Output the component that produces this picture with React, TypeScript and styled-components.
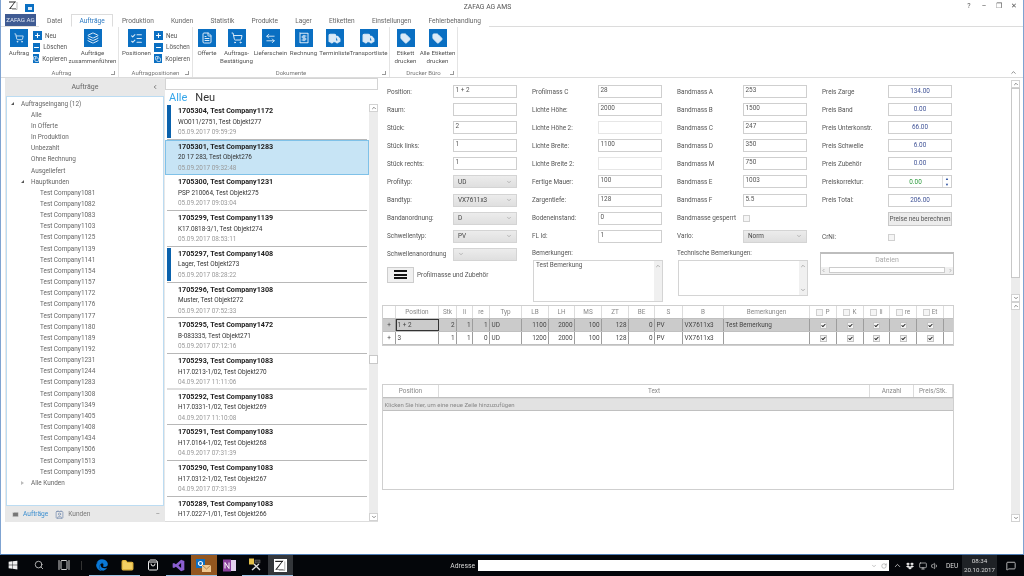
import React from "react";
import styled, { createGlobalStyle } from "styled-components";
import {
  ArrowLeftRight,
  Check,
  ChevronDown,
  ChevronLeft,
  ChevronRight,
  ChevronUp,
  Copy,
  FileText,
  Folder,
  Layers,
  ListChecks,
  Mail,
  MessageSquare,
  Minus,
  Monitor,
  Plus,
  Receipt,
  RotateCw,
  Search,
  ShoppingBag,
  ShoppingCart,
  Tag,
  Truck,
  Volume1,
  Contact,
  GalleryHorizontal,
} from "lucide-react";
import { FaDropbox, FaEdge, FaWindows } from "react-icons/fa";

const GlobalStyle = createGlobalStyle`
  html, body {
    margin: 0;
    padding: 0;
    background: #fff;
    overflow: hidden;
  }
  body {
    font-family: Roboto, "Open Sans", sans-serif;
    font-size: 6.4px;
    color: #444;
  }
  * { box-sizing: border-box; }
`;

const Screen = styled.div`
  width: 1024px;
  height: 576px;
  display: flex;
  flex-direction: column;
  overflow: hidden;
  filter: blur(0.3px);
`;

const AppWindow = styled.div`
  height: 555px;
  display: flex;
  flex-direction: column;
  border-left: 1px solid #7fa3d1;
  border-right: 1px solid #7fa3d1;
  border-bottom: 1px solid #4f7cb3;
  background: #fff;
`;

/* title bar */
const TitleBar = styled.div`
  height: 14px;
  display: flex;
  align-items: flex-start;
  position: relative;
  padding-left: 7px;
`;

const QuickSave = styled.div`
  width: 9px;
  height: 8px;
  margin: 4px 0 0 7px;
  background: #0a6fc2;
  display: flex;
  align-items: center;
  justify-content: center;
`;

const QuickSaveInner = styled.div`
  width: 4px;
  height: 3px;
  background: #dbe9f6;
`;

const TitleText = styled.div`
  flex: 1;
  text-align: center;
  padding-top: 3px;
  padding-right: 24px;
  color: #555;
  font-size: 6.8px;
`;

const WindowControls = styled.div`
  display: flex;
  gap: 7px;
  margin-right: 5px;
  color: #555;
  font-size: 7px;
  line-height: 9px;
  padding-top: 2px;
`;

const WindowControl = styled.span`
  width: 8px;
  text-align: center;
`;

/* tabs */
const TabRow = styled.div`
  height: 13px;
  display: flex;
  align-items: stretch;
  padding-left: 4px;
  border-bottom: 1px solid #dcdcdc;
`;

const BrandTab = styled.div`
  width: 31px;
  margin-right: 2.5px;
  background: #3f5b93;
  color: #dfe6f2;
  display: flex;
  align-items: center;
  justify-content: center;
  font-size: 6.2px;
  white-space: nowrap;
`;

const Tab = styled.div<{ $active?: boolean }>`
  padding: 0 7.6px;
  display: flex;
  align-items: center;
  white-space: nowrap;
  font-size: 6.6px;
  color: ${({ $active }) => ($active ? "#2b79c2" : "#666")};
  background: #fff;
  border: 1px solid ${({ $active }) => ($active ? "#dcdcdc" : "transparent")};
  border-bottom: 1px solid ${({ $active }) => ($active ? "#fff" : "transparent")};
  margin-bottom: -1px;
`;

/* ribbon */
const Ribbon = styled.div`
  height: 51px;
  display: flex;
  padding-left: 4px;
  border-bottom: 1px solid #dcdcdc;
`;

const RibbonGroup = styled.div<{ $width: number }>`
  width: ${({ $width }) => $width}px;
  display: flex;
  flex-direction: column;
  border-right: 1px solid #e4e4e4;
  padding-top: 2px;
`;

const GroupBody = styled.div`
  flex: 1;
  display: flex;
`;

const GroupFoot = styled.div`
  height: 9px;
  position: relative;
  text-align: center;
  color: #777;
  font-size: 6px;
  line-height: 9px;
`;

const Launcher = styled.span`
  position: absolute;
  right: 3px;
  top: 3px;
  width: 4px;
  height: 4px;
  border-right: 1px solid #999;
  border-bottom: 1px solid #999;
`;

const BigButton = styled.div<{ $width: number }>`
  width: ${({ $width }) => $width}px;
  display: flex;
  flex-direction: column;
  align-items: center;
  text-align: center;
  color: #555;
  font-size: 6.15px;
  line-height: 7.5px;
  white-space: nowrap;
`;

const BigIcon = styled.div`
  width: 18px;
  height: 18px;
  margin-bottom: 3px;
  background: #0a6fc2;
  color: #dbeaf7;
  display: flex;
  align-items: center;
  justify-content: center;
`;

const SmallColumn = styled.div<{ $width: number }>`
  width: ${({ $width }) => $width}px;
  display: flex;
  flex-direction: column;
  gap: 2.7px;
  padding-top: 2px;
`;

const SmallButton = styled.div`
  height: 9px;
  display: flex;
  align-items: center;
  gap: 3px;
  font-size: 6.3px;
  color: #555;
`;

const SmallIcon = styled.div`
  width: 9px;
  height: 9px;
  background: #0a6fc2;
  color: #fff;
  display: flex;
  align-items: center;
  justify-content: center;
`;

const RibbonCollapse = styled.div`
  margin: auto 6px 1px auto;
  color: #666;
  display: flex;
`;

/* main */
const Main = styled.div`
  flex: 1;
  min-height: 0;
  display: flex;
  padding: 0 0 32px 4px;
`;

const LeftPane = styled.div`
  width: 160px;
  display: flex;
  flex-direction: column;
  background: #e8e8e8;
`;

const PaneHeader = styled.div`
  height: 18px;
  display: flex;
  align-items: center;
  justify-content: center;
  position: relative;
  font-size: 7px;
  color: #666;
`;

const PaneCollapse = styled.span`
  position: absolute;
  right: 7px;
  top: 6px;
  color: #555;
  display: flex;
`;

const TreeBox = styled.div`
  flex: 1;
  margin: 0 1px 0 1px;
  padding-top: 1px;
  background: #fff;
  border: 1px solid #bcdcf2;
  overflow: hidden;
`;

const TreeRow = styled.div<{ $level: number }>`
  height: 11.17px;
  padding-left: ${({ $level }) => [14, 24, 33][$level]}px;
  display: flex;
  align-items: center;
  position: relative;
  color: #666;
  white-space: nowrap;
`;

const TreeArrow = styled.span<{ $open: boolean }>`
  position: absolute;
  margin-left: -10px;
  width: 0;
  height: 0;
  border-style: solid;
  ${({ $open }) =>
    $open
      ? "border-width: 0 0 3.5px 3.5px; border-color: transparent transparent #555 transparent;"
      : "border-width: 2.5px 0 2.5px 3px; border-color: transparent transparent transparent #bbb;"}
`;

const PaneFooter = styled.div`
  height: 16px;
  display: flex;
  align-items: center;
  padding-left: 7px;
  color: #777;
`;

const FooterTab = styled.span<{ $active?: boolean }>`
  margin: 0 7px 0 4px;
  color: ${({ $active }) => ($active ? "#3c8fd0" : "#777")};
  font-size: 6.6px;
`;

const FooterMinus = styled.span`
  margin-left: auto;
  margin-right: 5px;
  color: #888;
`;

/* order list */
const ListPane = styled.div`
  width: 213px;
  display: flex;
  flex-direction: column;
`;

const SearchBox = styled.div`
  height: 12px;
  border: 1px solid #d4d4d4;
`;

const ListTabs = styled.div`
  height: 14px;
  display: flex;
  gap: 8px;
  padding-left: 4px;
  align-items: center;
  font-size: 11px;
`;

const ListTab = styled.span<{ $active?: boolean }>`
  color: ${({ $active }) => ($active ? "#35a6ea" : "#333")};
`;

const ListBody = styled.div`
  flex: 1;
  min-height: 0;
  display: flex;
  border-bottom: 1px solid #ddd;
`;

const Orders = styled.div`
  flex: 1;
  overflow: hidden;
`;

const OrderItem = styled.div<{ $selected?: boolean }>`
  height: 35.73px;
  padding: 0 2px;
  background: ${({ $selected }) => ($selected ? "#c7e4f5" : "#fff")};
  outline: ${({ $selected }) => ($selected ? "1px solid #7fc1e8" : "none")};
  outline-offset: -1px;
`;

const OrderInner = styled.div<{ $thick?: boolean; $selected?: boolean }>`
  height: 100%;
  display: flex;
  border-bottom: ${({ $thick }) => ($thick ? "2px solid #dedede" : "1px solid #b8b8b8")};
  border-color: ${({ $selected, $thick }) => ($selected ? "#8eb4cc" : $thick ? "#dedede" : "#b8b8b8")};
`;

const OrderBar = styled.div<{ $on?: boolean }>`
  width: 3.5px;
  margin: 1px 7.5px 1px 0;
  background: ${({ $on }) => ($on ? "#0a62ad" : "transparent")};
`;

const OrderText = styled.div`
  display: flex;
  flex-direction: column;
  padding-top: 2px;
  white-space: nowrap;
`;

const OrderTitle = styled.div`
  height: 10.5px;
  line-height: 10.5px;
  font-weight: 700;
  font-size: 7.2px;
  color: #222;
`;

const OrderSub = styled.div`
  height: 10.5px;
  line-height: 10.5px;
  font-size: 6.4px;
  color: #333;
`;

const OrderDate = styled.div`
  height: 10.5px;
  line-height: 10.5px;
  font-size: 6.4px;
  color: #999;
`;

/* scrollbars */
const ScrollBar = styled.div<{ $height?: number }>`
  width: 9px;
  ${({ $height }) => ($height ? `height: ${$height}px;` : "")}
  display: flex;
  flex-direction: column;
  background: #ececec;
  color: #666;
`;

const ScrollArrow = styled.div<{ $end?: boolean }>`
  height: 8px;
  background: #fff;
  border: 1px solid #d2d2d2;
  display: flex;
  align-items: center;
  justify-content: center;
  ${({ $end }) => ($end ? "margin-top: auto;" : "")}
`;

const ScrollThumb = styled.div<{ $top: number; $height: number }>`
  margin-top: ${({ $top }) => $top}px;
  height: ${({ $height }) => $height}px;
  background: #fff;
  border: 1px solid #c8c8c8;
`;

/* form */
const RightPane = styled.div`
  flex: 1;
  display: flex;
  min-width: 0;
`;

const RightContent = styled.div`
  flex: 1;
  min-width: 0;
  display: flex;
  flex-direction: column;
  padding-left: 4px;
`;

const ScrollStack = styled.div`
  width: 9px;
  margin: 0 3px 0 0;
  display: flex;
  flex-direction: column;
  padding-top: 2px;
`;

const FormGrid = styled.div`
  height: 227px;
  overflow: hidden;
  padding: 7px 0 0 5px;
  display: grid;
  grid-template-columns: repeat(4, 145px);
`;

const FormColumn = styled.div`
  display: flex;
  flex-direction: column;
  gap: 5.1px;
`;

const FieldRow = styled.div`
  height: 13px;
  display: flex;
  align-items: center;
  flex: none;
`;

const FieldLabel = styled.div`
  width: 66px;
  color: #555;
  white-space: nowrap;
`;

const ValueBox = styled.div<{ $price?: boolean; $off?: boolean }>`
  width: 64px;
  height: 13px;
  border: 1px solid ${({ $off }) => ($off ? "#e6e6e6" : "#cfcfcf")};
  padding: 0 1.5px;
  line-height: 8px;
  color: ${({ $price }) => ($price ? "#3f5296" : "#555")};
  text-align: ${({ $price }) => ($price ? "center" : "left")};
  ${({ $price }) => ($price ? "line-height: 11px;" : "")}
`;

const SpinBox = styled.div`
  width: 64px;
  height: 13px;
  border: 1px solid #cfcfcf;
  display: flex;
  color: #2c9a3c;
`;

const SpinValue = styled.div`
  flex: 1;
  text-align: center;
  line-height: 12px;
`;

const SpinButtons = styled.div`
  width: 9px;
  border-left: 1px solid #ddd;
  display: flex;
  flex-direction: column;
  align-items: center;
  color: #2b4fa0;
  font-size: 4px;
  line-height: 5.5px;
`;

const SelectBox = styled.div`
  width: 64px;
  height: 13px;
  padding: 0 4px;
  border: 1px solid #d4d4d4;
  background: linear-gradient(#ececec, #dfdfdf);
  color: #444;
  display: flex;
  align-items: center;
  justify-content: space-between;
`;

const CheckBoxEmpty = styled.div`
  width: 7px;
  height: 7px;
  border: 1px solid #d0d0d0;
  background: #f5f5f5;
`;

const MenuButton = styled.div`
  margin-top: 1px;
  height: 16px;
  display: flex;
  align-items: center;
  gap: 3px;
  color: #555;
`;

const MenuFace = styled.div`
  width: 27px;
  height: 16px;
  border: 1px solid #cdcdcd;
  background: #f0f0f0;
  display: flex;
  flex-direction: column;
  justify-content: center;
  align-items: center;
  gap: 1.5px;
`;

const MenuBar = styled.div`
  width: 13px;
  height: 2px;
  background: #111;
`;

const NoteBlock = styled.div`
  display: flex;
  flex-direction: column;
  flex: none;
`;

const NoteLabel = styled.div`
  height: 12px;
  line-height: 11px;
  color: #555;
`;

const NoteArea = styled.div<{ $height: number }>`
  width: 130px;
  height: ${({ $height }) => $height}px;
  margin-left: 1px;
  border: 1px solid #d4d4d4;
  display: flex;
  justify-content: space-between;
  color: #555;
  padding-left: 2px;
`;

const NoteScroll = styled.div`
  width: 8px;
  background: #f0f0f0;
  display: flex;
  flex-direction: column;
  justify-content: space-between;
  color: #999;
`;

const NoteArrow = styled.div`
  display: flex;
  justify-content: center;
  padding: 2px 0;
`;

const RecalcButton = styled.div`
  width: 64px;
  height: 14px;
  margin-left: 66px;
  flex: none;
  border: 1px solid #c8c8c8;
  background: #ececec;
  display: flex;
  align-items: center;
  justify-content: center;
  white-space: nowrap;
  color: #555;
`;

const FilesBox = styled.div`
  width: 134px;
  height: 23px;
  margin: 3px 0 0 -2px;
  flex: none;
  border: 1px solid #c4c4c4;
  border-top: 2px solid #bdbdbd;
  display: flex;
  flex-direction: column;
`;

const FilesTitle = styled.div`
  flex: 1;
  text-align: center;
  color: #aaa;
  font-size: 7px;
  line-height: 13px;
`;

const FilesScroll = styled.div`
  height: 7px;
  display: flex;
  align-items: center;
  justify-content: space-between;
  background: #f0f0f0;
  color: #999;
`;

const FilesThumb = styled.div`
  flex: 1;
  margin: 0 3px;
  height: 6px;
  background: #fff;
  border: 1px solid #ccc;
`;

/* tables */
const mainColumns =
  "13px 43px 18px 16px 17px 32px 27px 26px 27px 27px 26px 28px 41px 86px 27px 27px 26px 27px 27px 1fr";
const extraColumns = "56px 431px 44px 1fr";

const GridFrame = styled.div<{ $height?: number; $top?: number }>`
  width: 572px;
  margin-top: ${({ $top }) => $top ?? 0}px;
  ${({ $height }) => ($height ? `height: ${$height}px;` : "")}
  flex: none;
  border: 1px solid #cfcfcf;
`;

const GridRow = styled.div<{ $cols: string; $bg?: string; $line?: boolean }>`
  display: grid;
  grid-template-columns: ${({ $cols }) => $cols};
  height: 13px;
  background: ${({ $bg }) => $bg ?? "#fff"};
  border-bottom: 1px solid ${({ $line }) => ($line ? "#c0c0c0" : "transparent")};
`;

const HeadCell = styled.div`
  display: flex;
  align-items: center;
  justify-content: center;
  gap: 2px;
  color: #888;
  border-right: 1px solid #dcdcdc;
  white-space: nowrap;
`;

const BodyCell = styled.div<{ $right?: boolean; $focus?: boolean; $center?: boolean }>`
  display: flex;
  align-items: center;
  padding: 0 1.5px;
  justify-content: ${({ $right, $center }) => ($right ? "flex-end" : $center ? "center" : "flex-start")};
  color: #444;
  white-space: nowrap;
  border-right: 1px solid #9d9d9d;
  ${({ $focus }) => ($focus ? "outline: 1.5px solid #333; outline-offset: -1.5px;" : "")}
`;

const MiniCheck = styled.div`
  width: 7px;
  height: 7px;
  background: #f4f4f4;
  border: 1px solid #c4c4c4;
  color: #222;
  display: flex;
  align-items: center;
  justify-content: center;
`;

const AddRow = styled.div`
  height: 13px;
  padding-left: 1.5px;
  line-height: 12px;
  background: #e2e2e2;
  color: #888;
  font-size: 6px;
  border-bottom: 1px solid #c0c0c0;
  border-top: 1px solid #d8d8d8;
`;

/* taskbar */
const Taskbar = styled.div`
  flex: 1;
  display: flex;
  align-items: stretch;
  background: #04060a;
  color: #d8d8d8;
`;

const TaskItem = styled.div<{ $width?: number; $bg?: string; $running?: boolean }>`
  width: ${({ $width }) => $width ?? 25.5}px;
  flex: none;
  display: flex;
  align-items: center;
  justify-content: center;
  background: ${({ $bg }) => $bg ?? "transparent"};
  border-bottom: 1px solid ${({ $running }) => ($running ? "#9dc5e6" : "transparent")};
`;

const TaskDivider = styled.div`
  width: 1px;
  height: 9px;
  margin: auto 7px auto 4px;
  background: #333;
`;

const ZTile = styled.div`
  width: 13px;
  height: 13px;
  background: #fff;
  display: flex;
  align-items: center;
  justify-content: center;
`;

const AddressGroup = styled.div`
  margin-left: auto;
  display: flex;
  align-items: center;
  gap: 3px;
  font-size: 6.8px;
`;

const AddressInput = styled.div`
  width: 411px;
  height: 11px;
  background: #fff;
  color: #888;
  display: flex;
  align-items: center;
  justify-content: flex-end;
  gap: 4px;
  padding-right: 2px;
`;

const TrayIcons = styled.div`
  width: 73px;
  flex: none;
  padding-left: 3.5px;
  display: flex;
  align-items: center;
  gap: 4.5px;
  color: #ddd;
`;

const TrayLang = styled.div`
  margin-left: 2.5px;
  font-size: 6.6px;
`;

const Clock = styled.div`
  width: 35px;
  background: #1f2226;
  display: flex;
  flex-direction: column;
  align-items: center;
  justify-content: center;
  font-size: 6.2px;
  line-height: 8.5px;
`;

const NotifyItem = styled.div`
  width: 27px;
  display: flex;
  align-items: center;
  justify-content: center;
`;

const treeCompanies = [
  1081, 1082, 1083, 1103, 1125, 1139, 1141, 1154, 1157, 1172, 1176, 1177, 1180, 1189, 1192, 1231, 1244, 1283,
  1308, 1349, 1405, 1408, 1434, 1506, 1513, 1595,
];

const treeFilters = ["Alle", "In Offerte", "In Produktion", "Unbezahlt", "Ohne Rechnung", "Ausgeliefert"];

const orders = [
  { t: "1705304, Test Company1172", s: "WO011/2751, Test Objekt277", d: "05.09.2017 09:59:29", bar: true },
  { t: "1705301, Test Company1283", s: "20 17 283, Test Objekt276", d: "05.09.2017 09:32:48", sel: true },
  { t: "1705300, Test Company1231", s: "PSP 210064, Test Objekt275", d: "05.09.2017 09:03:04" },
  { t: "1705299, Test Company1139", s: "K17.0818-3/1, Test Objekt274", d: "05.09.2017 08:53:11" },
  { t: "1705297, Test Company1408", s: "Lager, Test Objekt273", d: "05.09.2017 08:28:22", bar: true },
  { t: "1705296, Test Company1308", s: "Muster, Test Objekt272", d: "05.09.2017 07:52:33" },
  { t: "1705295, Test Company1472", s: "B-083335, Test Objekt271", d: "05.09.2017 07:12:16" },
  { t: "1705293, Test Company1083", s: "H17.0213-1/02, Test Objekt270", d: "04.09.2017 11:11:06", thick: true },
  { t: "1705292, Test Company1083", s: "H17.0331-1/02, Test Objekt269", d: "04.09.2017 11:10:08" },
  { t: "1705291, Test Company1083", s: "H17.0164-1/02, Test Objekt268", d: "04.09.2017 07:31:39" },
  { t: "1705290, Test Company1083", s: "H17.0312-1/02, Test Objekt267", d: "04.09.2017 07:31:39" },
  { t: "1705289, Test Company1083", s: "H17.0227-1/01, Test Objekt266", d: "" },
];

const tabs = ["Datei", "Aufträge", "Produktion", "Kunden", "Statistik", "Produkte", "Lager", "Etiketten", "Einstellungen", "Fehlerbehandlung"];

const col1 = [
  ["Position:", "1 + 2"],
  ["Raum:", ""],
  ["Stück:", "2"],
  ["Stück links:", "1"],
  ["Stück rechts:", "1"],
];
const col1Selects = [
  ["Profiltyp:", "UD"],
  ["Bandtyp:", "VX7611x3"],
  ["Bandanordnung:", "D"],
  ["Schwellentyp:", "PV"],
  ["Schwellenanordnung", ""],
];
const col2 = [
  ["Profilmass C", "28"],
  ["Lichte Höhe:", "2000"],
  ["Lichte Höhe 2:", "", "off"],
  ["Lichte Breite:", "1100"],
  ["Lichte Breite 2:", "", "off"],
  ["Fertige Mauer:", "100"],
  ["Zargentiefe:", "128"],
  ["Bodeneinstand:", "0"],
  ["FL Id:", "1"],
];
const col3 = [
  ["Bandmass A", "253"],
  ["Bandmass B", "1500"],
  ["Bandmass C", "247"],
  ["Bandmass D", "350"],
  ["Bandmass M", "750"],
  ["Bandmass E", "1003"],
  ["Bandmass F", "5.5"],
];
const col4 = [
  ["Preis Zarge", "134.00"],
  ["Preis Band", "0.00"],
  ["Preis Unterkonstr.", "66.00"],
  ["Preis Schwelle", "6.00"],
  ["Preis Zubehör", "0.00"],
];

const positions = [
  ["1 + 2", "2", "1", "1", "UD", "1100", "2000", "100", "128", "0", "PV", "VX7611x3", "Test Bemerkung"],
  ["3", "1", "1", "0", "UD", "1200", "2000", "100", "128", "0", "PV", "VX7611x3", ""],
];

const rightAligned = [1, 2, 3, 5, 6, 7, 8, 9];

const ZLogo = ({ size }: { size: number }) => (
  <svg width={size} height={size} viewBox="0 0 20 20">
    <path d="M2 3h13v2H2z" fill="#222" />
    <path d="M16 2 5 17h11v1H2L13 4z" fill="#222" />
    <path d="M18 4v15H8" fill="none" stroke="#777" strokeWidth="1" />
  </svg>
);

const VsLogo = () => (
  <svg width="13" height="13" viewBox="0 0 20 20">
    <path d="M14 1l5 2v14l-5 2-8-7-3 2-2-1V7l2-1 3 2zM14 6l-4 4 4 4z" fill="#8a5ed0" />
  </svg>
);

const OutlookLogo = () => (
  <svg width="15" height="14" viewBox="0 0 15 14">
    <rect x="0" y="1" width="9" height="9" fill="#0d6ec0" />
    <circle cx="4.5" cy="5.5" r="2" fill="none" stroke="#fff" strokeWidth="1.2" />
    <rect x="6" y="7" width="9" height="7" fill="#f0c890" />
    <path d="M6 7l4.5 4L15 7" fill="none" stroke="#a87a44" strokeWidth="0.8" />
  </svg>
);

const OneNoteLogo = () => (
  <svg width="13" height="13" viewBox="0 0 13 13">
    <rect x="3" y="1" width="10" height="11" fill="#e4d2ee" />
    <rect x="0" y="0.5" width="8" height="12" fill="#8a3f9c" />
    <path d="M2 9.5v-6l4 6v-6" fill="none" stroke="#fff" strokeWidth="1" />
  </svg>
);

const ToolsLogo = () => (
  <svg width="14" height="14" viewBox="0 0 14 14">
    <rect x="1" y="0.5" width="5" height="6" fill="#e6c24a" />
    <rect x="7" y="2" width="5" height="3" fill="#333" stroke="#777" strokeWidth="0.5" />
    <path d="M4 12 11 6M6 6l6 6" stroke="#ddd" strokeWidth="1.4" fill="none" />
  </svg>
);

const Launch = () => <Launcher />;

const Big = ({ width, icon, children }: { width: number; icon: React.ReactNode; children: React.ReactNode }) => (
  <BigButton $width={width}>
    <BigIcon>{icon}</BigIcon>
    {children}
  </BigButton>
);

const Small = ({ icon, label }: { icon: React.ReactNode; label: string }) => (
  <SmallButton>
    <SmallIcon>{icon}</SmallIcon>
    {label}
  </SmallButton>
);

const SmallSet = ({ width }: { width: number }) => (
  <SmallColumn $width={width}>
    <Small icon={<Plus size={7} strokeWidth={3.5} />} label="Neu" />
    <Small icon={<Minus size={7} strokeWidth={3.5} />} label="Löschen" />
    <Small icon={<Copy size={6} strokeWidth={2.5} />} label="Kopieren" />
  </SmallColumn>
);

const Arrow = ({ up }: { up?: boolean }) =>
  up ? <ChevronUp size={6} strokeWidth={3} /> : <ChevronDown size={6} strokeWidth={3} />;

const Field = ({ label, value, off }: { label: string; value: string; off?: boolean }) => (
  <FieldRow>
    <FieldLabel>{label}</FieldLabel>
    <ValueBox $off={off}>{value}</ValueBox>
  </FieldRow>
);

const SelectField = ({ label, value }: { label: string; value: string }) => (
  <FieldRow>
    <FieldLabel>{label}</FieldLabel>
    <SelectBox>
      {value}
      <ChevronDown size={6} color="#888" />
    </SelectBox>
  </FieldRow>
);

const PriceField = ({ label, value }: { label: string; value: string }) => (
  <FieldRow>
    <FieldLabel>{label}</FieldLabel>
    <ValueBox $price>{value}</ValueBox>
  </FieldRow>
);

const CheckCell = () => (
  <BodyCell $center>
    <MiniCheck>
      <Check size={5} strokeWidth={5} />
    </MiniCheck>
  </BodyCell>
);

const App = () => {
  return (
    <>
      <GlobalStyle />
      <Screen>
        <AppWindow>
          <TitleBar>
            <ZLogo size={10} />
            <QuickSave>
              <QuickSaveInner />
            </QuickSave>
            <TitleText>ZAFAG AG AMS</TitleText>
            <WindowControls>
              <WindowControl>?</WindowControl>
              <WindowControl>–</WindowControl>
              <WindowControl>❐</WindowControl>
              <WindowControl>✕</WindowControl>
            </WindowControls>
          </TitleBar>

          <TabRow>
            <BrandTab>ZAFAG AG</BrandTab>
            {tabs.map((t) => (
              <Tab key={t} $active={t === "Aufträge"}>
                {t}
              </Tab>
            ))}
          </TabRow>

          <Ribbon>
            <RibbonGroup $width={114}>
              <GroupBody>
                <Big width={28} icon={<ShoppingCart size={10} />}>
                  Auftrag
                </Big>
                <SmallSet width={34} />
                <Big width={51} icon={<Layers size={12} />}>
                  Aufträge
                  <br />
                  zusammenführen
                </Big>
              </GroupBody>
              <GroupFoot>
                Auftrag
                <Launch />
              </GroupFoot>
            </RibbonGroup>
            <RibbonGroup $width={74}>
              <GroupBody>
                <Big width={35} icon={<ListChecks size={13} />}>
                  Positionen
                </Big>
                <SmallSet width={36} />
              </GroupBody>
              <GroupFoot>
                Auftragpositionen
                <Launch />
              </GroupFoot>
            </RibbonGroup>
            <RibbonGroup $width={197}>
              <GroupBody>
                <Big width={28} icon={<FileText size={12} />}>
                  Offerte
                </Big>
                <Big width={31} icon={<ShoppingCart size={12} />}>
                  Auftrags-
                  <br />
                  Bestätigung
                </Big>
                <Big width={37} icon={<ArrowLeftRight size={11} />}>
                  Lieferschein
                </Big>
                <Big width={29} icon={<Receipt size={12} />}>
                  Rechnung
                </Big>
                <Big width={33} icon={<Truck size={13} fill="currentColor" />}>
                  Terminliste
                </Big>
                <Big width={35} icon={<Truck size={13} fill="currentColor" />}>
                  Transportliste
                </Big>
              </GroupBody>
              <GroupFoot>
                Dokumente
                <Launch />
              </GroupFoot>
            </RibbonGroup>
            <RibbonGroup $width={68}>
              <GroupBody>
                <Big width={31} icon={<Tag size={11} fill="currentColor" />}>
                  Etikett
                  <br />
                  drucken
                </Big>
                <Big width={33} icon={<Tag size={11} fill="currentColor" />}>
                  Alle Etiketten
                  <br />
                  drucken
                </Big>
              </GroupBody>
              <GroupFoot>
                Drucker Büro
                <Launch />
              </GroupFoot>
            </RibbonGroup>
            <RibbonCollapse>
              <ChevronUp size={7} strokeWidth={2.5} />
            </RibbonCollapse>
          </Ribbon>

          <Main>
            <LeftPane>
              <PaneHeader>
                Aufträge
                <PaneCollapse>
                  <ChevronLeft size={6} strokeWidth={3} />
                </PaneCollapse>
              </PaneHeader>
              <TreeBox>
                <TreeRow $level={0}>
                  <TreeArrow $open />
                  Auftragseingang (12)
                </TreeRow>
                {treeFilters.map((f) => (
                  <TreeRow key={f} $level={1}>
                    {f}
                  </TreeRow>
                ))}
                <TreeRow $level={1}>
                  <TreeArrow $open />
                  Hauptkunden
                </TreeRow>
                {treeCompanies.map((c) => (
                  <TreeRow key={c} $level={2}>
                    Test Company{c}
                  </TreeRow>
                ))}
                <TreeRow $level={1}>
                  <TreeArrow $open={false} />
                  Alle Kunden
                </TreeRow>
              </TreeBox>
              <PaneFooter>
                <Mail size={7} fill="#777" color="#e8e8e8" />
                <FooterTab $active>Aufträge</FooterTab>
                <Contact size={9} color="#7a8fb0" />
                <FooterTab>Kunden</FooterTab>
                <FooterMinus>–</FooterMinus>
              </PaneFooter>
            </LeftPane>

            <ListPane>
              <SearchBox />
              <ListTabs>
                <ListTab $active>Alle</ListTab>
                <ListTab>Neu</ListTab>
              </ListTabs>
              <ListBody>
                <Orders>
                  {orders.map((o) => (
                    <OrderItem key={o.t} $selected={o.sel}>
                      <OrderInner $thick={o.thick} $selected={o.sel}>
                        <OrderBar $on={o.bar} />
                        <OrderText>
                          <OrderTitle>{o.t}</OrderTitle>
                          <OrderSub>{o.s}</OrderSub>
                          <OrderDate>{o.d}</OrderDate>
                        </OrderText>
                      </OrderInner>
                    </OrderItem>
                  ))}
                </Orders>
                <ScrollBar>
                  <ScrollArrow>
                    <Arrow up />
                  </ScrollArrow>
                  <ScrollThumb $top={243} $height={9} />
                  <ScrollArrow $end>
                    <Arrow />
                  </ScrollArrow>
                </ScrollBar>
              </ListBody>
            </ListPane>

            <RightPane>
              <RightContent>
                <FormGrid>
                  <FormColumn>
                    {col1.map(([l, v]) => (
                      <Field key={l} label={l} value={v} />
                    ))}
                    {col1Selects.map(([l, v]) => (
                      <SelectField key={l} label={l} value={v} />
                    ))}
                    <MenuButton>
                      <MenuFace>
                        <MenuBar />
                        <MenuBar />
                        <MenuBar />
                      </MenuFace>
                      Profilmasse und Zubehör
                    </MenuButton>
                  </FormColumn>

                  <FormColumn>
                    {col2.map(([l, v, off]) => (
                      <Field key={l} label={l} value={v} off={!!off} />
                    ))}
                    <NoteBlock>
                      <NoteLabel>Bemerkungen:</NoteLabel>
                      <NoteArea $height={42}>
                        Test Bemerkung
                        <NoteScroll>
                          <NoteArrow>
                            <Arrow up />
                          </NoteArrow>
                        </NoteScroll>
                      </NoteArea>
                    </NoteBlock>
                  </FormColumn>

                  <FormColumn>
                    {col3.map(([l, v]) => (
                      <Field key={l} label={l} value={v} />
                    ))}
                    <FieldRow>
                      <FieldLabel>Bandmasse gesperrt</FieldLabel>
                      <CheckBoxEmpty />
                    </FieldRow>
                    <SelectField label="Vario:" value="Norm" />
                    <NoteBlock>
                      <NoteLabel>Technische Bemerkungen:</NoteLabel>
                      <NoteArea $height={36}>
                        <span />
                        <NoteScroll>
                          <NoteArrow>
                            <Arrow up />
                          </NoteArrow>
                          <NoteArrow>
                            <Arrow />
                          </NoteArrow>
                        </NoteScroll>
                      </NoteArea>
                    </NoteBlock>
                  </FormColumn>

                  <FormColumn>
                    {col4.map(([l, v]) => (
                      <PriceField key={l} label={l} value={v} />
                    ))}
                    <FieldRow>
                      <FieldLabel>Preiskorrektur:</FieldLabel>
                      <SpinBox>
                        <SpinValue>0.00</SpinValue>
                        <SpinButtons>
                          <span>▲</span>
                          <span>▼</span>
                        </SpinButtons>
                      </SpinBox>
                    </FieldRow>
                    <PriceField label="Preis Total:" value="206.00" />
                    <RecalcButton>Preise neu berechnen</RecalcButton>
                    <FieldRow>
                      <FieldLabel>CrNi:</FieldLabel>
                      <CheckBoxEmpty />
                    </FieldRow>
                    <FilesBox>
                      <FilesTitle>Dateien</FilesTitle>
                      <FilesScroll>
                        <ChevronLeft size={5} strokeWidth={3} />
                        <FilesThumb />
                        <ChevronRight size={5} strokeWidth={3} />
                      </FilesScroll>
                    </FilesBox>
                  </FormColumn>
                </FormGrid>

                <GridFrame>
                  <GridRow $cols={mainColumns} $line>
                    <HeadCell />
                    {["Position", "Stk", "li", "re", "Typ", "LB", "LH", "MS", "ZT", "BE", "S", "B", "Bemerkungen"].map((h) => (
                      <HeadCell key={h}>{h}</HeadCell>
                    ))}
                    {["P", "K", "li", "re", "Et"].map((h) => (
                      <HeadCell key={h}>
                        <CheckBoxEmpty />
                        {h}
                      </HeadCell>
                    ))}
                  </GridRow>
                  {positions.map((row, r) => (
                    <GridRow key={row[0]} $cols={mainColumns} $bg={r === 0 ? "#cbcbcb" : "#fff"} $line>
                      <BodyCell $center>+</BodyCell>
                      {row.map((v, i) => (
                        <BodyCell key={i} $right={rightAligned.includes(i)} $focus={r === 0 && i === 0}>
                          {v}
                        </BodyCell>
                      ))}
                      <CheckCell />
                      <CheckCell />
                      <CheckCell />
                      <CheckCell />
                      <CheckCell />
                    </GridRow>
                  ))}
                </GridFrame>

                <GridFrame $top={38} $height={106}>
                  <GridRow $cols={extraColumns} $line>
                    <HeadCell>Position</HeadCell>
                    <HeadCell>Text</HeadCell>
                    <HeadCell>Anzahl</HeadCell>
                    <HeadCell>Preis/Stk.</HeadCell>
                  </GridRow>
                  <AddRow>Klicken Sie hier, um eine neue Zeile hinzuzufügen</AddRow>
                </GridFrame>
              </RightContent>

              <ScrollStack>
                <ScrollBar $height={222}>
                  <ScrollArrow>
                    <Arrow up />
                  </ScrollArrow>
                  <ScrollThumb $top={0} $height={190} />
                  <ScrollArrow $end>
                    <Arrow />
                  </ScrollArrow>
                </ScrollBar>
                <ScrollBar $height={220}>
                  <ScrollArrow>
                    <Arrow up />
                  </ScrollArrow>
                  <ScrollArrow $end>
                    <Arrow />
                  </ScrollArrow>
                </ScrollBar>
              </ScrollStack>
            </RightPane>
          </Main>
        </AppWindow>

        <Taskbar>
          <TaskItem $width={26}>
            <FaWindows size={10} color="#eee" />
          </TaskItem>
          <TaskItem $width={25}>
            <Search size={10} color="#ccc" />
          </TaskItem>
          <TaskItem $width={26}>
            <GalleryHorizontal size={12} color="#ccc" />
          </TaskItem>
          <TaskDivider />
          <TaskItem $running>
            <FaEdge size={12} color="#0a78d7" />
          </TaskItem>
          <TaskItem $running>
            <Folder size={13} color="#e8b93e" fill="#f3cf63" />
          </TaskItem>
          <TaskItem>
            <ShoppingBag size={12} color="#eee" />
          </TaskItem>
          <TaskItem $running>
            <VsLogo />
          </TaskItem>
          <TaskItem $bg="#93561f" $running>
            <OutlookLogo />
          </TaskItem>
          <TaskItem>
            <OneNoteLogo />
          </TaskItem>
          <TaskItem $running>
            <ToolsLogo />
          </TaskItem>
          <TaskItem $bg="#33363a" $running>
            <ZTile>
              <ZLogo size={12} />
            </ZTile>
          </TaskItem>
          <AddressGroup>
            Adresse
            <AddressInput>
              <ChevronDown size={6} />
              <RotateCw size={6} />
            </AddressInput>
          </AddressGroup>
          <TrayIcons>
            <ChevronUp size={9} />
            <FaDropbox size={8} color="#eee" />
            <Monitor size={8} />
            <Volume1 size={8} />
            <TrayLang>DEU</TrayLang>
          </TrayIcons>
          <Clock>
            <span>08:34</span>
            <span>20.10.2017</span>
          </Clock>
          <NotifyItem>
            <MessageSquare size={10} />
          </NotifyItem>
        </Taskbar>
      </Screen>
    </>
  );
};

export default App;
